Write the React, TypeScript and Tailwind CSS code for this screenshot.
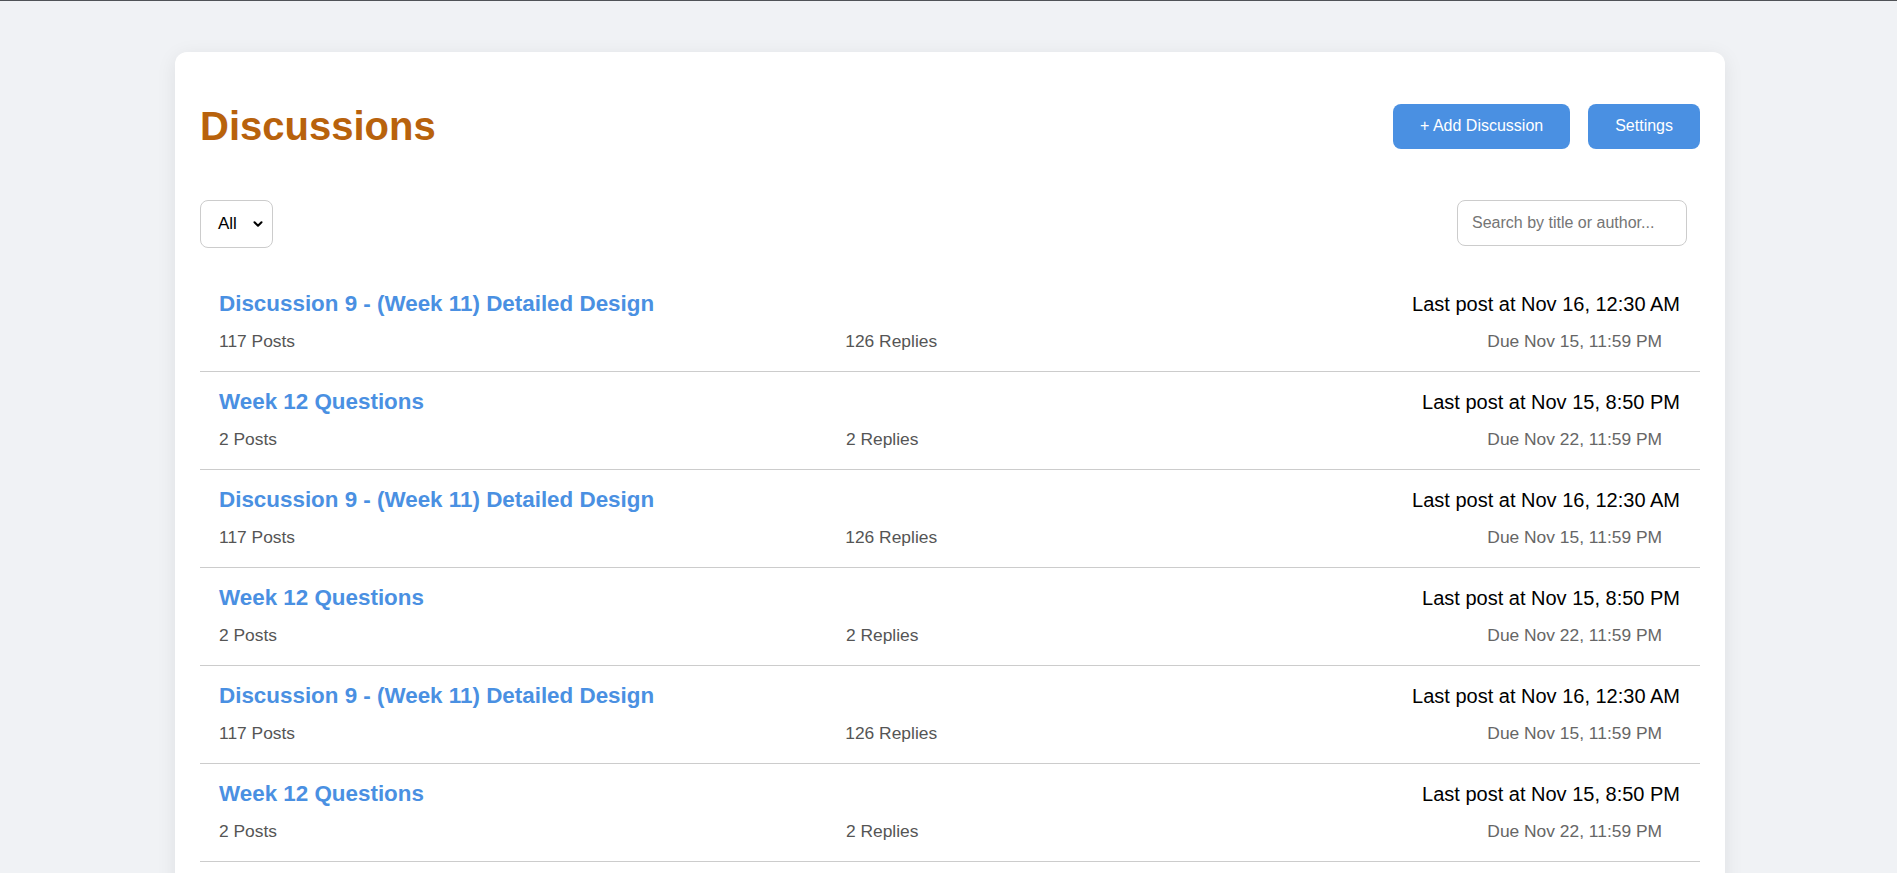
import { ChevronDown } from "lucide-react";

type Discussion = {
  title: string;
  posts: number;
  replies: number;
  lastPost: string;
  due: string;
};

const DISCUSSIONS: Discussion[] = [
  { title: "Discussion 9 - (Week 11) Detailed Design", posts: 117, replies: 126, lastPost: "Nov 16, 12:30 AM", due: "Nov 15, 11:59 PM" },
  { title: "Week 12 Questions", posts: 2, replies: 2, lastPost: "Nov 15, 8:50 PM", due: "Nov 22, 11:59 PM" },
  { title: "Discussion 9 - (Week 11) Detailed Design", posts: 117, replies: 126, lastPost: "Nov 16, 12:30 AM", due: "Nov 15, 11:59 PM" },
  { title: "Week 12 Questions", posts: 2, replies: 2, lastPost: "Nov 15, 8:50 PM", due: "Nov 22, 11:59 PM" },
  { title: "Discussion 9 - (Week 11) Detailed Design", posts: 117, replies: 126, lastPost: "Nov 16, 12:30 AM", due: "Nov 15, 11:59 PM" },
  { title: "Week 12 Questions", posts: 2, replies: 2, lastPost: "Nov 15, 8:50 PM", due: "Nov 22, 11:59 PM" },
];

const DiscussionRow = ({ item }: { item: Discussion }) => (
  <li className="border-b border-[#cccccc] pt-[17px] pr-[20px] pb-[20px] pl-[19px]">
    <div className="flex items-baseline justify-between">
      <a href="#" className="text-[22.4px] font-bold text-[#4a90e2]">
        {item.title}
      </a>
      <span className="text-[20px] text-black">Last post at {item.lastPost}</span>
    </div>
    <div className="mt-[14.3px] flex justify-between pr-[18px] text-[17.4px]">
      <span className="text-[#555555]">{item.posts} Posts</span>
      <span className="text-[#555555]">{item.replies} Replies</span>
      <span className="text-[#666666]">Due {item.due}</span>
    </div>
  </li>
);

export default function App() {
  return (
    <div
      className="h-screen overflow-hidden border-t border-[#505357] bg-[#f0f2f5] leading-[1.15]"
      style={{ fontFamily: '"Liberation Sans", Arial, sans-serif' }}
    >
      <main className="mt-[51px] ml-[175px] min-h-[900px] w-[1550px] rounded-[12px] bg-white px-[25px] pt-[51px] shadow-[0_4px_20px_rgba(0,0,0,0.08)]">
        <div className="flex items-center justify-between">
          <h1 className="text-[40px] leading-[46px] font-bold text-[#b8620c]">Discussions</h1>
          <div className="flex gap-[18px]">
            <button className="h-[45px] rounded-[8px] bg-[#4a90e2] px-[27px] text-[16px] text-white">
              + Add Discussion
            </button>
            <button className="h-[45px] rounded-[8px] bg-[#4a90e2] px-[27px] text-[16px] text-white">
              Settings
            </button>
          </div>
        </div>

        <div className="mt-[51px] flex items-start justify-between">
          <div className="flex h-[48px] w-[73px] items-center justify-between rounded-[8px] border border-[#cccccc] pr-[7px] pl-[17px] text-[17px] text-black">
            <span>All</span>
            <ChevronDown className="h-[14px] w-[14px]" strokeWidth={3.5} />
          </div>
          <input
            type="text"
            placeholder="Search by title or author..."
            className="mr-[13px] h-[46px] w-[230px] rounded-[8px] border border-[#cccccc] px-[14px] text-[16px] outline-none placeholder:text-[#757575]"
          />
        </div>

        <ul className="mt-[26px]">
          {DISCUSSIONS.map((item, i) => (
            <DiscussionRow key={`${item.title}-${i}`} item={item} />
          ))}
        </ul>
      </main>
    </div>
  );
}
